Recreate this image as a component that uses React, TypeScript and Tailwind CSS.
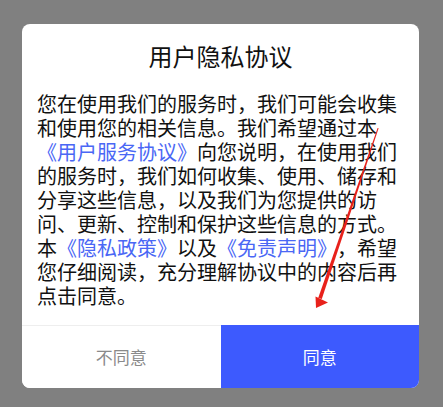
import React from "react";

const font = { fontFamily: '"Noto Sans CJK SC", "Noto Sans", sans-serif' };

function Link({ children }: { children: React.ReactNode }) {
  return <span className="text-[#4a67f5]">{children}</span>;
}

export default function App() {
  return (
    <div className="relative w-[443px] h-[407px] bg-[#808080] pt-[24px]" style={font}>
      <div className="ml-[22px] w-[397px] bg-white rounded-lg overflow-hidden flex flex-col">
        <h1 className="pt-[16px] text-center text-[24px] leading-[32px] text-[#111]">用户隐私协议</h1>

        {/* full-width punctuation kept un-trimmed, like the Android text view */}
        <p className="mt-[20px] px-[15px] text-[20px] leading-[24px] text-[#111] [text-spacing-trim:space-all]">
          您在使用我们的服务时，我们可能会收集和使用您的相关信息。我们希望通过本
          <Link>《用户服务协议》</Link>
          向您说明，在使用我们的服务时，我们如何收集、使用、储存和分享这些信息，以及我们为您提供的访问、更新、控制和保护这些信息的方式。本
          <Link>《隐私政策》</Link>
          以及
          <Link>《免责声明》</Link>
          ，希望您仔细阅读，充分理解协议中的内容后再点击同意。
        </p>

        <div className="mt-[17px] flex h-[63px]">
          <button className="flex-1 border-t border-[#eeeeee] bg-white text-[17px] text-[#8a8a8a]">
            不同意
          </button>
          <button className="flex-1 bg-[#3d5afe] text-[17px] text-white">同意</button>
        </div>
      </div>

      {/* red annotation arrow drawn over the dialog */}
      <svg className="absolute inset-0 pointer-events-none" width="443" height="407" viewBox="0 0 443 407">
        <polygon points="377.6,128 378.6,128.3 321.8,299 318.2,298" fill="#e8211b" />
        <polygon points="315.5,296.5 316,308 328,302.5" fill="#e8211b" />
      </svg>
    </div>
  );
}
